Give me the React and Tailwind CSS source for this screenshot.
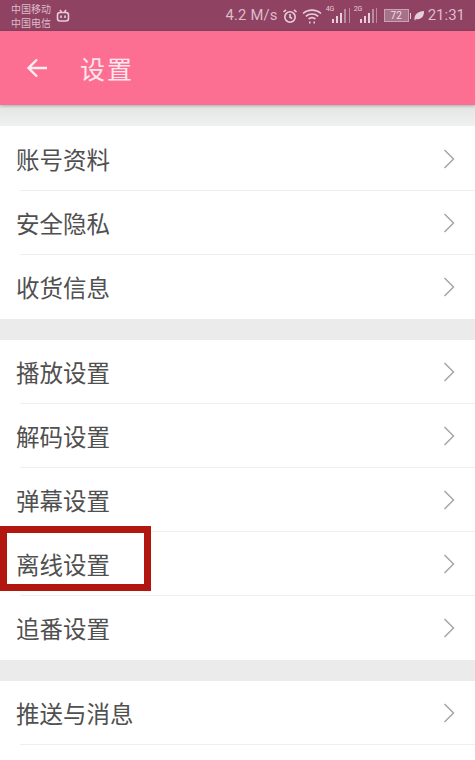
import React from 'react';

const cjk = { fontFamily: '"Noto Sans CJK SC", "Liberation Sans", sans-serif' };
const roboto = { fontFamily: 'Roboto, sans-serif' };

const groups = [
  ['账号资料', '安全隐私', '收货信息'],
  ['播放设置', '解码设置', '弹幕设置', '离线设置', '追番设置'],
  ['推送与消息'],
];

const Bars = ({ label }) => (
  <div className="relative flex items-end gap-[2px] h-[14px] w-[20px] justify-end">
    <span className="absolute left-0 top-[-3px] text-[7px] leading-none text-[#e6cfd9]" style={roboto}>{label}</span>
    <span className="w-[2px] h-[4px] bg-[#e6cfd9]" />
    <span className="w-[2px] h-[7px] bg-[#e6cfd9]" />
    <span className="w-[2px] h-[10px] bg-[#e6cfd9]" />
    <span className="w-[2px] h-[14px] bg-[#b98aa0]" />
  </div>
);

const StatusBar = () => (
  <div className="h-[31px] bg-[#8f4262] flex items-center pl-[11px] pr-[10px] text-[#dcbcc9]" style={cjk}>
    <div className="flex flex-col text-[10px] leading-[14px] w-[42px] whitespace-nowrap">
      <span>中国移动</span>
      <span>中国电信</span>
    </div>
    <svg width="14" height="14" viewBox="0 0 14 14" fill="none" stroke="#e6cdd7" strokeWidth="1.6" className="ml-[3px] mt-[1px]">
      <path d="M4 1l1.5 2M10 1L8.500 3" />
      <rect x="1.500" y="3.500" width="11" height="8.500" rx="2.500" />
      <path d="M5 6.500v2.500M9 6.500v2.500" />
    </svg>
    <span className="ml-auto text-[14.800px] tracking-[0.2px] whitespace-nowrap" style={roboto}>4.2 M/s</span>
    <svg width="16" height="16" viewBox="0 0 16 16" fill="none" stroke="#e6cfd9" strokeWidth="1.600" className="ml-[4px]">
      <circle cx="8" cy="9" r="5.200" />
      <path d="M8 6v3.200l2 1.300M1.500 4L4 1.800M14.500 4L12 1.800" />
    </svg>
    <svg width="20" height="16" viewBox="0 0 20 16" fill="none" stroke="#e6cfd9" strokeWidth="1.600" className="ml-[4px]">
      <path d="M1 5.500c5-4.500 13-4.500 18 0M3.800 8.300c3.400-3 9-3 12.400 0M6.600 11c1.900-1.500 4.900-1.500 6.800 0" />
      <path d="M7 14.500h1.500M11.500 14.500H13" strokeWidth="2.200" />
    </svg>
    <div className="ml-[4px]"><Bars label="4G" /></div>
    <span className="w-px h-[15px] bg-[#b98aa0] ml-[3px]" />
    <div className="ml-[4px]"><Bars label="2G" /></div>
    <span className="w-px h-[15px] bg-[#b98aa0] ml-[2px]" />
    <div className="ml-[7px] w-[25px] h-[13px] border border-[#c9a2b4] bg-[#a8718a] flex items-center justify-center text-[10px] leading-none text-[#f0dfe6]" style={roboto}>72</div>
    <span className="ml-px w-[1px] h-[6px] bg-[#e6cfd9]" />
    <svg width="12" height="13" viewBox="0 0 12 12" className="ml-[2px]" fill="#e6cfd9">
      <path d="M1.500 10.500C1 5 5 1.500 11 1.500c.3 5.500-3 9-8 8L2 11z" />
    </svg>
    <span className="ml-[3px] text-[15px] whitespace-nowrap" style={roboto}>21:31</span>
  </div>
);

const Header = () => (
  <div className="relative h-[74px] bg-[#fd6f92] flex items-center pl-[26px] shadow-[0_1px_3px_rgba(0,0,0,0.25)]">
    <svg width="22" height="22" viewBox="0 0 22 22" fill="none" stroke="#fdeef2" strokeWidth="2.400">
      <path d="M21 11H2.500M11 2.500L2.500 11l8.500 8.500" />
    </svg>
    <span className="ml-[32px] text-[25px] leading-none text-[#fde7ed] tracking-[2px]" style={cjk}>设置</span>
  </div>
);

const Chevron = () => (
  <svg width="12" height="20" viewBox="0 0 12 20" fill="none" stroke="#a6a6a6" strokeWidth="1.500" className="ml-auto">
    <path d="M1.500 1l9 9-9 9" />
  </svg>
);

const Row = ({ label, tall, last }) => (
  <div className={`relative flex items-center pl-[16px] pr-[20px] bg-white ${tall ? 'h-[65px]' : 'h-[64px]'}`}>
    <span className="text-[23.500px] leading-none text-[#505050] mt-[2px]" style={cjk}>{label}</span>
    <Chevron />
    {!last && <div className="absolute left-[20px] right-0 bottom-0 h-px bg-[#eeeeee]" />}
    {label === '离线设置' && (
      <div className="absolute left-0 top-[-6px] w-[151px] h-[65px] border-[7px] border-[#b1170f]" />
    )}
  </div>
);

const App = () => (
  <div className="w-[475px] h-[760px] overflow-hidden bg-white">
    <StatusBar />
    <Header />
    {groups.map((rows, i) => (
      <div key={i}>
        <div className={`h-[21px] ${i === 0 ? 'bg-gradient-to-b from-[#e3e5e5] to-[#f0f0f0]' : 'bg-[#ebebeb]'}`} />
        {rows.map((label, j) => (
          <Row
            key={label}
            label={label}
            tall={i === 0 && j === 0}
            last={j === rows.length - 1 && i < groups.length - 1}
          />
        ))}
      </div>
    ))}
  </div>
);

export default App;
